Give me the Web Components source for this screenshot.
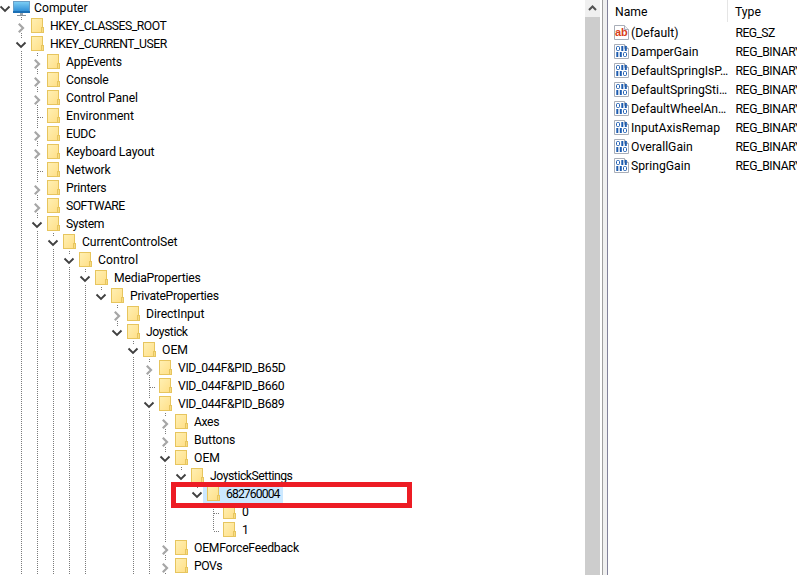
<!DOCTYPE html>
<html>
<head>
<meta charset="utf-8">
<style>
html,body{margin:0;padding:0;background:#fff;overflow:hidden}
body{width:797px;height:575px;font:12.2px Roboto,"Noto Sans",sans-serif;color:#000}
</style>
</head>
<body>
<reg-editor>
  <tree-pane slot="tree">
    <tree-row level="0" state="open" end icon="pc">Computer</tree-row>
    <tree-row level="1" state="closed" ls="-.47">HKEY_CLASSES_ROOT</tree-row>
    <tree-row level="1" state="open" ls="-.47">HKEY_CURRENT_USER</tree-row>
    <tree-row level="2" state="closed" ls="-.2" guides="1">AppEvents</tree-row>
    <tree-row level="2" state="closed" ls="-.25" guides="1">Console</tree-row>
    <tree-row level="2" state="closed" ls="-.08" guides="1">Control Panel</tree-row>
    <tree-row level="2" state="leaf" guides="1">Environment</tree-row>
    <tree-row level="2" state="closed" ls="-.25" guides="1">EUDC</tree-row>
    <tree-row level="2" state="closed" ls="-.13" guides="1">Keyboard Layout</tree-row>
    <tree-row level="2" state="leaf" ls="-.14" guides="1">Network</tree-row>
    <tree-row level="2" state="closed" ls="-.25" guides="1">Printers</tree-row>
    <tree-row level="2" state="closed" ls="-.5" guides="1">SOFTWARE</tree-row>
    <tree-row level="2" state="open" ls="-.4" guides="1">System</tree-row>
    <tree-row level="3" state="open" ls="-.1" guides="1 2">CurrentControlSet</tree-row>
    <tree-row level="4" state="open" ls=".1" guides="1 2 3">Control</tree-row>
    <tree-row level="5" state="open" ls="-.2" guides="1 2 3 4">MediaProperties</tree-row>
    <tree-row level="6" state="open" ls="-.3" end guides="1 2 3 4 5">PrivateProperties</tree-row>
    <tree-row level="7" state="closed" ls="-.1" guides="1 2 3 4 5">DirectInput</tree-row>
    <tree-row level="7" state="open" ls="-.45" end guides="1 2 3 4 5">Joystick</tree-row>
    <tree-row level="8" state="open" guides="1 2 3 4 5">OEM</tree-row>
    <tree-row level="9" state="closed" ls="-.35" guides="1 2 3 4 5 8">VID_044F&amp;PID_B65D</tree-row>
    <tree-row level="9" state="leaf" ls="-.35" guides="1 2 3 4 5 8">VID_044F&amp;PID_B660</tree-row>
    <tree-row level="9" state="open" ls="-.35" guides="1 2 3 4 5 8">VID_044F&amp;PID_B689</tree-row>
    <tree-row level="10" state="closed" ls="-.4" guides="1 2 3 4 5 8 9">Axes</tree-row>
    <tree-row level="10" state="closed" ls="-.14" guides="1 2 3 4 5 8 9">Buttons</tree-row>
    <tree-row level="10" state="open" guides="1 2 3 4 5 8 9">OEM</tree-row>
    <tree-row level="11" state="open" ls="-.45" end guides="1 2 3 4 5 8 9 10">JoystickSettings</tree-row>
    <tree-row level="12" state="open" ls="-.9" end selected guides="1 2 3 4 5 8 9 10">682760004</tree-row>
    <tree-row level="13" state="leaf" guides="1 2 3 4 5 8 9 10">0</tree-row>
    <tree-row level="13" state="leaf" end guides="1 2 3 4 5 8 9 10">1</tree-row>
    <tree-row level="10" state="closed" ls="-.25" guides="1 2 3 4 5 8 9">OEMForceFeedback</tree-row>
    <tree-row level="10" state="closed" ls="-.5" guides="1 2 3 4 5 8 9">POVs</tree-row>
    <focus-frame slot="over"></focus-frame>
  </tree-pane>
  <value-list slot="list">
    <value-row kind="sz" type="REG_SZ" tls="-.6">(Default)</value-row>
    <value-row kind="bin" type="REG_BINARY">DamperGain</value-row>
    <value-row kind="bin" type="REG_BINARY">DefaultSpringIsP…</value-row>
    <value-row kind="bin" type="REG_BINARY">DefaultSpringSti…</value-row>
    <value-row kind="bin" type="REG_BINARY">DefaultWheelAn…</value-row>
    <value-row kind="bin" type="REG_BINARY">InputAxisRemap</value-row>
    <value-row kind="bin" type="REG_BINARY">OverallGain</value-row>
    <value-row kind="bin" type="REG_BINARY">SpringGain</value-row>
  </value-list>
</reg-editor>
<script>
function shadow(el, html){ el.attachShadow({mode:'open'}).innerHTML = html; }

class RegEditor extends HTMLElement{
  constructor(){super();shadow(this,`<style>
    :host{display:grid;grid-template-columns:585px 15px 2px 1px 4px 1px 189px;width:797px;height:575px;overflow:hidden}
    .track{display:grid;grid-template-rows:16px 1fr;background:#f0f0f0}
    .track div{display:flex;justify-content:center}
    .thumb{background:#cdcdcd;margin-top:1px}
    .w{background:#fff}.l1{background:#a0a0a0}.mid{background:#f0f0f0}.l2{background:#82829a}
    svg{display:block}
  </style>
  <slot name="tree"></slot>
  <div class="track"><div><svg width="15" height="16"><path d="M4 10 L7.500 6.500 L11 10" fill="none" stroke="#505050" stroke-width="2"/></svg></div><div class="thumb"></div></div>
  <div class="w"></div><div class="l1"></div><div class="mid"></div><div class="l2"></div>
  <slot name="list"></slot>`);}
}
class TreePane extends HTMLElement{
  constructor(){super();shadow(this,`<style>
    :host{display:block;position:relative;height:575px;overflow:hidden}
    .rows{margin-top:-1px}
  </style><div class="rows"><slot></slot></div><slot name="over"></slot>`);}
}
const DOT='stroke="#7a7a7a" stroke-dasharray="1 1" shape-rendering="crispEdges" fill="none"';
const FOLDER=`<svg width="13" height="15" viewBox="0 0 13 15"><defs><linearGradient id="f" x1="0" y1="0" x2="1" y2="1"><stop offset="0" stop-color="#fff0b4"/><stop offset="1" stop-color="#ffdf87"/></linearGradient></defs><rect x=".5" y=".5" width="11" height="14" fill="url(#f)" stroke="#e7c55e"/><rect x="10.500" y="9.500" width="2" height="5" fill="#f7dc84" stroke="#e7c55e"/></svg>`;
const PC=`<svg width="17" height="16" viewBox="0 0 17 16"><defs><linearGradient id="s" x1="0" y1="0" x2="0" y2="1"><stop offset="0" stop-color="#7fd0f5"/><stop offset="1" stop-color="#2a8ad4"/></linearGradient></defs><rect x=".5" y="1.500" width="16" height="10.500" fill="url(#s)" stroke="#6b9fc6"/><rect x="0" y="11" width="17" height="2" fill="#1b6fb4"/><rect x="7" y="13" width="3" height="2" fill="#9aa4ac"/><rect x="4" y="15" width="9" height="1" fill="#8a949c"/></svg>`;

class TreeRow extends HTMLElement{
  constructor(){super();
    const L=+this.getAttribute('level');
    const st=this.getAttribute('state');
    const end=this.hasAttribute('end');
    const sel=this.hasAttribute('selected');
    const ls=this.getAttribute('ls')||0;
    const guides=(this.getAttribute('guides')||'').split(' ').filter(Boolean).map(Number);
    let cells='';
    for(let k=1;k<L;k++){
      cells+=`<svg class="c" width="16" height="18">${guides.includes(k)?`<path d="M8.500 0V18" ${DOT}/>`:''}</svg>`;
    }
    let inner='';
    if(st==='leaf'){
      inner=`<path d="M8.500 0V${end?10:18}" ${DOT}/><path d="M9 10.500H15" ${DOT}/>`;
    }else{
      if(L>0){ inner+=`<path d="M8.500 0V3" ${DOT}/>`; if(!end) inner+=`<path d="M8.500 16V18" ${DOT}/>`; }
      inner+= st==='open'
        ? `<path d="M3.500 7.500L8 12L12.500 7.500" fill="none" stroke="#404040" stroke-width="1.900"/>`
        : `<path d="M5.800 6.800L10 11L5.800 15.200" fill="none" stroke="#a6a6a6" stroke-width="2.200"/>`;
    }
    cells+= L===0
      ? `<svg class="c" width="13" height="18" viewBox="3 0 13 18">${inner}</svg>`
      : `<svg class="c" width="16" height="18">${inner}</svg>`;
    const pc=this.getAttribute('icon')==='pc';
    shadow(this,`<style>
      :host{display:flex;height:18px;white-space:nowrap;line-height:18px;padding-left:${L?13:0}px;letter-spacing:${ls}px}
      .c{display:block;flex:none}
      .item{display:flex;height:18px}
      .sel{background:#cce8ff;margin-left:-2px;padding-left:2px;padding-right:3px}
      .ic{width:21px;flex:none;display:flex;align-items:flex-start}
      .ic svg{display:block;margin:1px 0 0 ${pc?0:2}px}
    </style>${cells}<div class="item ${sel?'sel':''}"><div class="ic">${pc?PC:FOLDER}</div><slot></slot></div>`);
  }
}
class FocusFrame extends HTMLElement{
  constructor(){super();shadow(this,`<style>
    :host{position:absolute;left:171px;top:482px;width:241px;height:26px;box-sizing:border-box;border:5px solid #ed1c24;display:block}
  </style>`);}
}
class ValueList extends HTMLElement{
  constructor(){super();shadow(this,`<style>
    :host{display:block;height:575px;overflow:hidden}
    .head{display:grid;grid-template-columns:120px 1fr;height:24px;line-height:24px}
    .head div{padding-left:7px;white-space:nowrap}
    .head div:first-child{border-right:1px solid #e5e5e5;height:22px}
  </style><div class="head"><div>Name</div><div>Type</div></div><slot></slot>`);}
}
const DOC='<path d="M.5 .5H10.500L14.500 4.500V14.500H.5Z" fill="#fff" stroke="#a9aeb8"/><path d="M10.500 .5V4.500H14.500" fill="#eef0f4" stroke="#a9aeb8"/>';
function digits(y,pat){let s='',x=2;for(const d of pat){ if(d==='0'){s+=`<rect x="${x+.5}" y="${y+.5}" width="3" height="4" rx="1" fill="none" stroke="#1d5cb0"/>`;x+=5}else{s+=`<rect x="${x+.3}" y="${y}" width="2" height="5" fill="#1d5cb0"/>`;x+=3.500}}return s}
const ICONS={
  sz:`<svg width="15" height="15" viewBox="0 0 15 15">${DOC}<text x="1" y="10.500" font-family="Liberation Sans" font-weight="700" font-size="11" fill="#d8401a">ab</text></svg>`,
  bin:`<svg width="15" height="15" viewBox="0 0 15 15">${DOC}${digits(2,'011')}${digits(8,'110')}</svg>`
};
class ValueRow extends HTMLElement{
  constructor(){super();
    const k=this.getAttribute('kind'),t=this.getAttribute('type');
    const tls=this.getAttribute('tls')||'-.4';
    shadow(this,`<style>
      :host{display:grid;grid-template-columns:121px 1fr;height:19px;line-height:19px;white-space:nowrap}
      .n{display:flex;padding-left:6px;overflow:hidden}
      .n svg{display:block;flex:none;margin:1px 2px 0 0}
      .t{padding-left:6.500px;overflow:hidden;letter-spacing:${tls}px}
    </style><div class="n">${ICONS[k]}<slot></slot></div><div class="t">${t}</div>`);
  }
}
customElements.define('reg-editor',RegEditor);
customElements.define('tree-pane',TreePane);
customElements.define('tree-row',TreeRow);
customElements.define('focus-frame',FocusFrame);
customElements.define('value-list',ValueList);
customElements.define('value-row',ValueRow);
</script>
</body>
</html>
